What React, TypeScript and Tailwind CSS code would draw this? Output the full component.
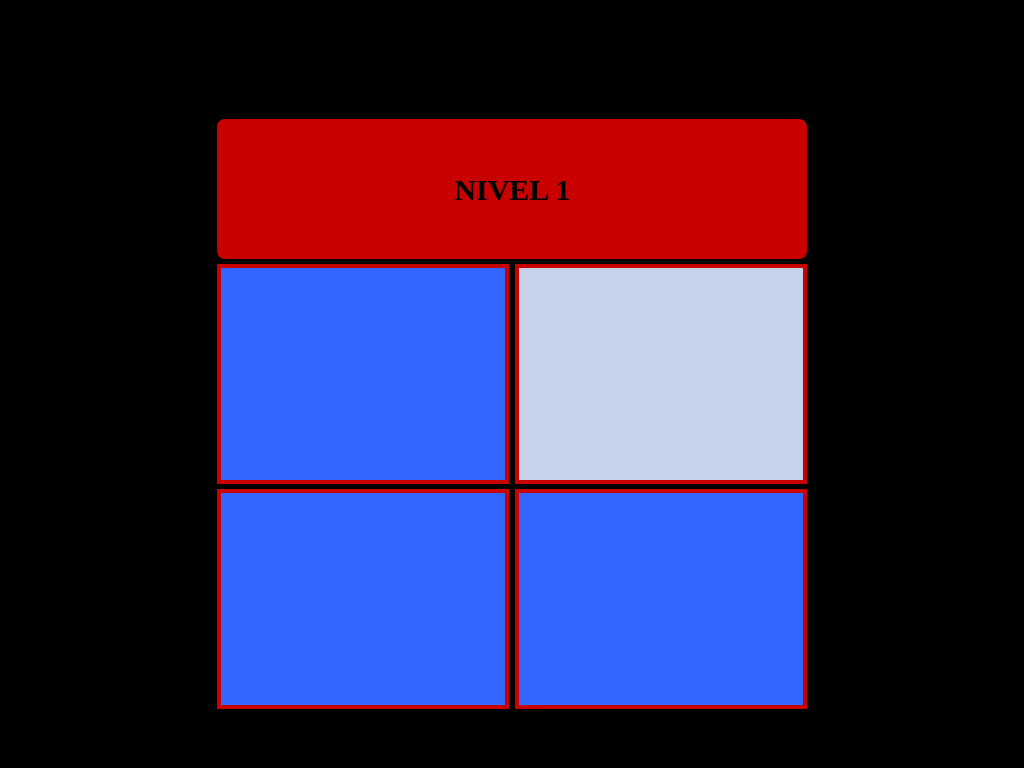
import React from 'react';

const cells = [
  { id: 1, active: true },
  { id: 2, active: false },
  { id: 3, active: true },
  { id: 4, active: true },
];

export default function App() {
  return (
    <div className="min-h-[768px] w-full bg-black pt-[119px]">
      <div className="mx-auto flex w-[590px] flex-col gap-[5px]">
        {/* Level header */}
        <div className="flex h-[140px] items-center justify-center rounded-lg bg-[#c80000]">
          <h1 className="text-[30px] font-bold text-black" style={{ fontFamily: '"Liberation Serif", serif' }}>
            NIVEL 1
          </h1>
        </div>

        {/* Board */}
        <div className="grid grid-cols-2 gap-x-[6px] gap-y-[5px]">
          {cells.map((cell) => (
            <div
              key={cell.id}
              className={`h-[220px] border-4 border-[#c80000] ${cell.active ? 'bg-[#3366ff]' : 'bg-[#c6d1ea]'}`}
            />
          ))}
        </div>
      </div>
    </div>
  );
}
